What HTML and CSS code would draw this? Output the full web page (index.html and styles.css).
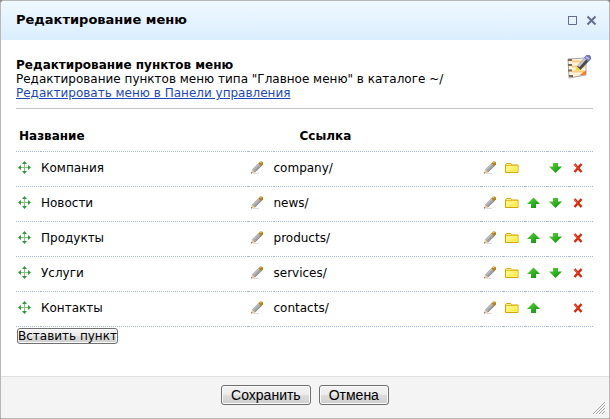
FILE: index.html
```
<!DOCTYPE html>
<html lang="ru">
<head>
    <meta charset="UTF-8">
    <meta name="viewport" content="width=device-width, initial-scale=1.0">
    <title>Редактирование меню</title>
    <link rel="stylesheet" href="styles.css">
</head>
<body>

    <svg class="sprite" aria-hidden="true">
        <linearGradient id="green" x1="0" y1="0" x2="1" y2="1">
            <stop offset="0" stop-color="#5fd83c" />
            <stop offset="1" stop-color="#078a07" />
        </linearGradient>
        <linearGradient id="yellow" x1="0" y1="0" x2="1" y2="1">
            <stop offset="0" stop-color="#fffbb0" />
            <stop offset="1" stop-color="#ffe622" />
        </linearGradient>
        <symbol id="move" viewBox="0 0 14 14">
            <path d="M6.5 3v8M2.5 6.5h9" stroke="#7cc47c" />
            <path d="M6.5 0L9 3H4zM6.5 13L9 10H4zM0 6.5L3 4v5zM13 6.5L10 4v5z" fill="#2f9a38" />
        </symbol>
        <symbol id="pencil" viewBox="0 0 14 14">
            <path d="M3 12.5h6" stroke="#dedede" />
            <path d="M1 12.5l1-4 3 3z" fill="#efcb9c" />
            <path d="M1 12.500l.5-1.500 1 1z" fill="#444" />
            <path d="M2 8.500l6.500-6.500 3 3L5 11.500z" fill="#a2a2a2" />
            <path d="M3 9l6.200-6.200" stroke="#bdbdbd" stroke-width="1.500" />
            <path d="M4.800 11.200l6.500-6.300" stroke="#858585" stroke-width=".7" />
            <path d="M8.500 2L10 .5h2L13 1.500V3.500L11 5.500z" fill="#b08228" />
            <path d="M9.500 1.500h2" stroke="#edc64c" />
        </symbol>
        <symbol id="folder" viewBox="0 0 14 14">
            <path d="M.5 11.500v-8l1-1h4l1 1.500h6.500v7.500z" fill="#ffe96b" stroke="#d9a400" />
            <path d="M1.500 5.500h10.500v5H1.500z" fill="url(#yellow)" stroke="#fff37a" />
            <path d="M2 3.500h3.500" stroke="#fff3a0" />
            <path d="M1 4.500h11" stroke="#e9bf1e" />
        </symbol>
        <symbol id="up" viewBox="0 0 14 14">
            <path d="M6.500 1.500L13 8H9v4H4V8H0z" fill="url(#green)" />
        </symbol>
        <symbol id="down" viewBox="0 0 14 14">
            <path d="M6.500 12L0 5.500h4V2h5v3.500h4z" fill="url(#green)" />
        </symbol>
        <symbol id="delete" viewBox="0 0 14 14">
            <path d="M3.500 3l7 8M10.500 3l-7 8" stroke="#dc2608" stroke-width="2.400" />
            <path d="M3 3l4 4.500" stroke="#f36a4b" />
        </symbol>
    </svg>

    <form class="dialog">
        <header class="dialog-head">
            <h1>Редактирование меню</h1>
            <button type="button" class="win-btn" aria-label="Развернуть">
                <svg width="11" height="11" viewBox="0 0 11 11"><path d="M1.500 1.500h8v8h-8z" fill="none" stroke="#636b94" /><path d="M1 1.500h9" stroke="#636b94" stroke-width="1" /></svg>
            </button>
            <button type="button" class="win-btn" aria-label="Закрыть">
                <svg width="11" height="11" viewBox="0 0 11 11"><path d="M1.500 1.500l8 8M9.500 1.500l-8 8" stroke="#636b94" stroke-width="2" /></svg>
            </button>
        </header>

        <main class="content">
            <section class="intro">
                <div>
                    <h2>Редактирование пунктов меню</h2>
                    <p>Редактирование пунктов меню типа "Главное меню" в каталоге ~/</p>
                    <a href="#">Редактировать меню в Панели управления</a>
                </div>
                <svg class="intro-icon" width="26" height="26" viewBox="0 0 26 26" aria-hidden="true">
                    <path d="M1 5l18-1v17L2 24z" fill="#fff3dc" stroke="#a8a5b5" />
                    <path d="M5 7.500h14M5 12.500h14M5 17.500h14" stroke="#ffc987" stroke-width="2" />
                    <path d="M12 21.500l7-1v-4z" fill="#f47a20" />
                    <path d="M1 6h4M1 11h4M1 16.500h4M2 22h4" stroke="#866a43" stroke-width="2" />
                    <path d="M8 17l2-5 4 4z" fill="#f4e233" />
                    <path d="M10 12.500l7.500-8.500 4 3.500-8 8.500z" fill="#4a4a50" />
                    <path d="M11.500 12.500l7-8" stroke="#c8c8cf" stroke-width="2" />
                    <path d="M17 3.500l2.500-2.500h3l1.500 2v2l-2.500 3z" fill="#7075ba" />
                    <path d="M19 3l3 2" stroke="#b9bde6" stroke-width="2" />
                </svg>
            </section>

            <table class="items">
                <colgroup>
                    <col class="col-move">
                    <col>
                    <col class="col-edit">
                    <col>
                    <col class="col-tool">
                    <col class="col-tool">
                    <col class="col-tool">
                    <col class="col-tool">
                    <col class="col-last">
                </colgroup>
                <thead>
                    <tr>
                        <th colspan="3">Название</th>
                        <th colspan="6" class="th-link">Ссылка</th>
                    </tr>
                </thead>
                <tbody>
                    <tr>
                        <td><button type="button" class="tool" aria-label="Переместить"><svg><use href="#move" /></svg></button></td>
                        <td>Компания</td>
                        <td><button type="button" class="tool" aria-label="Изменить название"><svg><use href="#pencil" /></svg></button></td>
                        <td>company/</td>
                        <td><button type="button" class="tool" aria-label="Изменить ссылку"><svg><use href="#pencil" /></svg></button></td>
                        <td><button type="button" class="tool" aria-label="Выбрать папку"><svg><use href="#folder" /></svg></button></td>
                        <td></td>
                        <td><button type="button" class="tool" aria-label="Вниз"><svg><use href="#down" /></svg></button></td>
                        <td><button type="button" class="tool" aria-label="Удалить"><svg><use href="#delete" /></svg></button></td>
                    </tr>
                    <tr>
                        <td><button type="button" class="tool" aria-label="Переместить"><svg><use href="#move" /></svg></button></td>
                        <td>Новости</td>
                        <td><button type="button" class="tool" aria-label="Изменить название"><svg><use href="#pencil" /></svg></button></td>
                        <td>news/</td>
                        <td><button type="button" class="tool" aria-label="Изменить ссылку"><svg><use href="#pencil" /></svg></button></td>
                        <td><button type="button" class="tool" aria-label="Выбрать папку"><svg><use href="#folder" /></svg></button></td>
                        <td><button type="button" class="tool" aria-label="Вверх"><svg><use href="#up" /></svg></button></td>
                        <td><button type="button" class="tool" aria-label="Вниз"><svg><use href="#down" /></svg></button></td>
                        <td><button type="button" class="tool" aria-label="Удалить"><svg><use href="#delete" /></svg></button></td>
                    </tr>
                    <tr>
                        <td><button type="button" class="tool" aria-label="Переместить"><svg><use href="#move" /></svg></button></td>
                        <td>Продукты</td>
                        <td><button type="button" class="tool" aria-label="Изменить название"><svg><use href="#pencil" /></svg></button></td>
                        <td>products/</td>
                        <td><button type="button" class="tool" aria-label="Изменить ссылку"><svg><use href="#pencil" /></svg></button></td>
                        <td><button type="button" class="tool" aria-label="Выбрать папку"><svg><use href="#folder" /></svg></button></td>
                        <td><button type="button" class="tool" aria-label="Вверх"><svg><use href="#up" /></svg></button></td>
                        <td><button type="button" class="tool" aria-label="Вниз"><svg><use href="#down" /></svg></button></td>
                        <td><button type="button" class="tool" aria-label="Удалить"><svg><use href="#delete" /></svg></button></td>
                    </tr>
                    <tr>
                        <td><button type="button" class="tool" aria-label="Переместить"><svg><use href="#move" /></svg></button></td>
                        <td>Услуги</td>
                        <td><button type="button" class="tool" aria-label="Изменить название"><svg><use href="#pencil" /></svg></button></td>
                        <td>services/</td>
                        <td><button type="button" class="tool" aria-label="Изменить ссылку"><svg><use href="#pencil" /></svg></button></td>
                        <td><button type="button" class="tool" aria-label="Выбрать папку"><svg><use href="#folder" /></svg></button></td>
                        <td><button type="button" class="tool" aria-label="Вверх"><svg><use href="#up" /></svg></button></td>
                        <td><button type="button" class="tool" aria-label="Вниз"><svg><use href="#down" /></svg></button></td>
                        <td><button type="button" class="tool" aria-label="Удалить"><svg><use href="#delete" /></svg></button></td>
                    </tr>
                    <tr>
                        <td><button type="button" class="tool" aria-label="Переместить"><svg><use href="#move" /></svg></button></td>
                        <td>Контакты</td>
                        <td><button type="button" class="tool" aria-label="Изменить название"><svg><use href="#pencil" /></svg></button></td>
                        <td>contacts/</td>
                        <td><button type="button" class="tool" aria-label="Изменить ссылку"><svg><use href="#pencil" /></svg></button></td>
                        <td><button type="button" class="tool" aria-label="Выбрать папку"><svg><use href="#folder" /></svg></button></td>
                        <td><button type="button" class="tool" aria-label="Вверх"><svg><use href="#up" /></svg></button></td>
                        <td></td>
                        <td><button type="button" class="tool" aria-label="Удалить"><svg><use href="#delete" /></svg></button></td>
                    </tr>
                </tbody>
            </table>

            <button type="button" class="btn btn-insert">Вставить пункт</button>
        </main>

        <footer class="dialog-foot">
            <button type="submit" class="btn">Сохранить</button>
            <button type="button" class="btn">Отмена</button>
            <svg class="resize" width="12" height="12" viewBox="0 0 12 12" aria-hidden="true">
                <path d="M0 12L12 0M3 12l9-9M6 12l6-6M9 12l3-3" stroke="#aaa" />
            </svg>
        </footer>
    </form>

</body>
</html>
```
FILE: styles.css
```
* {
    box-sizing: border-box;
}

body {
    margin: 0;
    background-color: #8a8a8a;
    color: #000;
    font-family: Verdana, "DejaVu Sans", sans-serif;
    font-size: 12px;
    line-height: 14px;
}

h1,
h2,
p {
    margin: 0;
    font-size: 12px;
}

.sprite {
    position: absolute;
    width: 0;
    height: 0;
}

.dialog {
    display: flex;
    flex-direction: column;
    min-height: 100vh;
    border: 1px solid #b8b8b8;
    border-radius: 4px 4px 2px 2px;
    background-color: #fff;
    overflow: hidden;
}

.dialog-head {
    display: flex;
    align-items: center;
    gap: 8px;
    padding: 12px 12px 13px 15px;
    background: linear-gradient(#eff8ff, #dbeefd);
}

.dialog-head h1 {
    flex: 1;
    font-size: 13px;
}

.win-btn,
.tool {
    display: block;
    padding: 0;
    border: none;
    background: none;
    cursor: pointer;
}

.win-btn svg,
.tool svg {
    display: block;
}

.content {
    flex: 1;
    padding: 18px 16px 16px 15px;
}

.intro {
    display: flex;
    justify-content: space-between;
    align-items: flex-start;
    padding-bottom: 8px;
    border-bottom: 1px solid #c4c4c4;
}

.intro-icon {
    margin-top: -4px;
}

a {
    color: #1c49b9;
}

.items {
    width: 100%;
    margin-top: 18px;
    border-collapse: collapse;
    table-layout: fixed;
}

.col-move,
.col-edit {
    width: 25px;
}

.col-tool {
    width: 22px;
}

.col-last {
    width: 24px;
}

.items tr {
    border-bottom: 1px dotted #a9b9d9;
}

.items th {
    height: 24px;
    padding: 0 0 6px 3px;
    text-align: left;
}

.items .th-link {
    padding-left: 26px;
}

.items td {
    height: 35px;
    padding: 0 0 1px;
}

.tool {
    padding: 0 2px;
}

.tool svg {
    width: 14px;
    height: 14px;
}

.btn {
    height: 20px;
    padding: 0 9px;
    border: 1px solid #707070;
    border-radius: 3px;
    background: linear-gradient(#f3f3f3 0%, #ebebeb 50%, #dddddd 50%, #cfcfcf 100%);
    box-shadow: inset 0 0 0 1px #fafafa;
    color: #000;
    font-family: Arial, "Liberation Sans", sans-serif;
    font-size: 14px;
    line-height: 16px;
    cursor: pointer;
}

.btn-insert {
    display: block;
    height: 16px;
    margin: 1px;
    padding: 0;
    font-family: inherit;
    font-size: 12px;
    line-height: 14px;
}

.dialog-foot {
    position: relative;
    display: flex;
    justify-content: center;
    gap: 8px;
    padding: 8px 8px 13px;
    border-top: 1px solid #e0e0e0;
    background-color: #f4f4f4;
}

.resize {
    position: absolute;
    right: 4px;
    bottom: 4px;
}
```
